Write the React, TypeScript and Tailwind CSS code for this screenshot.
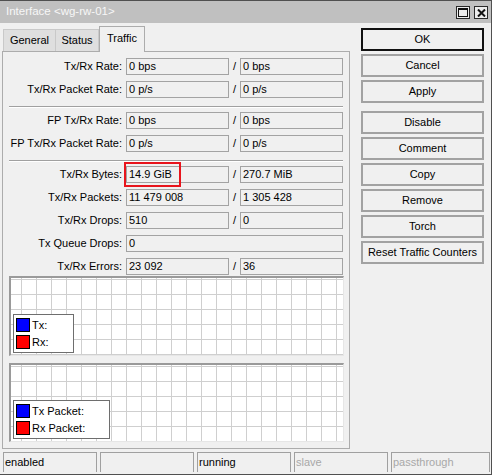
import type { ReactNode } from "react"

type Row = { label: string; tx: string; rx?: string; mark?: boolean }

const rates: Row[] = [
  { label: "Tx/Rx Rate:", tx: "0 bps", rx: "0 bps" },
  { label: "Tx/Rx Packet Rate:", tx: "0 p/s", rx: "0 p/s" },
]

const fpRates: Row[] = [
  { label: "FP Tx/Rx Rate:", tx: "0 bps", rx: "0 bps" },
  { label: "FP Tx/Rx Packet Rate:", tx: "0 p/s", rx: "0 p/s" },
]

const counters: Row[] = [
  { label: "Tx/Rx Bytes:", tx: "14.9 GiB", rx: "270.7 MiB", mark: true },
  { label: "Tx/Rx Packets:", tx: "11 479 008", rx: "1 305 428" },
  { label: "Tx/Rx Drops:", tx: "510", rx: "0" },
  { label: "Tx Queue Drops:", tx: "0" },
  { label: "Tx/Rx Errors:", tx: "23 092", rx: "36" },
]

const actions = ["Disable", "Comment", "Copy", "Remove", "Torch", "Reset Traffic Counters"]

function Field({ value, wide, children }: { value: string; wide?: boolean; children?: ReactNode }) {
  return (
    <div
      className={`relative h-[17px] ${wide ? "w-[217px]" : "w-[103px]"} border border-[#a3a3a3] pl-[2px] leading-[15px] text-black`}
    >
      {value}
      {children}
    </div>
  )
}

function FieldRow({ row }: { row: Row }) {
  return (
    <div className="flex h-[17px] items-center">
      <div className="w-[119px] mr-[4px] text-right text-black whitespace-nowrap">{row.label}</div>
      {row.rx === undefined ? (
        <Field value={row.tx} wide />
      ) : (
        <>
          <Field value={row.tx}>
            {row.mark && (
              <div className="absolute -left-[3px] -top-[5px] w-[57px] h-[25px] border-2 border-[#e8141c]" />
            )}
          </Field>
          <div className="w-[11px] text-center text-black">/</div>
          <Field value={row.rx} />
        </>
      )}
    </div>
  )
}

function Group({ rows }: { rows: Row[] }) {
  return (
    <div className="flex flex-col gap-[6px]">
      {rows.map((r) => (
        <FieldRow key={r.label} row={r} />
      ))}
    </div>
  )
}

function Separator() {
  return <div className="ml-[6px] mt-[8px] mb-[4px] w-[334px] h-[2px] border-t border-[#a0a0a0] border-b border-b-white" />
}

function Graph({ tx, rx, height }: { tx: string; rx: string; height: string }) {
  return (
    <div
      className={`relative ml-[6px] w-[335px] ${height} bg-white border-t-2 border-l-2 border-t-[#9a9a9a] border-l-[#9a9a9a] border-r border-b border-r-[#e6e6e6] border-b-[#e6e6e6] bg-[linear-gradient(to_right,#cfcfcf_1px,transparent_1px),linear-gradient(to_bottom,#cfcfcf_1px,transparent_1px)] bg-[size:15px_15px] bg-[position:10px_1px]`}
    >
      {/* legend box, bottom-left of the chart */}
      <div className="absolute left-[2px] bottom-[2px] flex flex-col gap-[3px] border border-[#6e6e6e] bg-white pl-[2px] pr-[24px] pt-[3px] pb-[3px]">
        <div className="flex items-center gap-[2px] h-[14px]">
          <div className="w-[14px] h-[14px] border border-black bg-[#0000ff]" />
          <span className="text-black whitespace-nowrap">{tx}</span>
        </div>
        <div className="flex items-center gap-[2px] h-[14px]">
          <div className="w-[14px] h-[14px] border border-black bg-[#ff0000]" />
          <span className="text-black whitespace-nowrap">{rx}</span>
        </div>
      </div>
    </div>
  )
}

function Button({ label, main }: { label: string; main?: boolean }) {
  return (
    <div
      className={`h-[23px] w-[123px] border-2 ${main ? "border-[#111]" : "border-[#a2a2a2]"} bg-[#f0f0f0] text-center leading-[19px] text-black`}
    >
      {label}
    </div>
  )
}

function StatusCell({ text, dim }: { text?: string; dim?: boolean }) {
  return (
    <div
      className={`h-[20px] w-[94px] border-t border-l border-r border-[#a0a0a0] pl-[1px] leading-[19px] ${dim ? "text-[#a8a8a8]" : "text-black"}`}
    >
      {text}
    </div>
  )
}

export default function App() {
  return (
    <div className="w-[494px] h-[476px] bg-white text-[11px] font-['Liberation_Sans',Arial,sans-serif]">
      <div className="w-[492px] h-[475px] flex flex-col bg-[#f0f0f0] border-t border-r border-b border-[#505050]">
        {/* title bar */}
        <div className="h-[22px] bg-[#c0c0c0] flex items-center justify-between pl-[6px] pr-[3px]">
          <span className="text-[#f7f7f7] text-[11.5px]">Interface &lt;wg-rw-01&gt;</span>
          <div className="flex gap-[4px] pt-[1px]">
            <div className="w-[14px] h-[13px] border border-[#2a2a2a] bg-[#ececec] flex items-center justify-center">
              <svg width="10" height="9" viewBox="0 0 10 9">
                <rect x="0.5" y="0.5" width="9" height="8" fill="none" stroke="#111" />
                <rect x="0" y="0" width="10" height="2" fill="#111" />
              </svg>
            </div>
            <div className="w-[14px] h-[13px] border border-[#2a2a2a] bg-[#ececec] flex items-center justify-center">
              <svg width="9" height="8" viewBox="0 0 9 8">
                <path d="M1 0.5 L8 7.5 M8 0.5 L1 7.5" stroke="#111" strokeWidth="2" />
              </svg>
            </div>
          </div>
        </div>

        <div className="flex pl-[2px]">
          {/* tabs + traffic panel */}
          <div className="w-[348px] flex flex-col">
            <div className="h-[28px] flex items-end pl-[1px]">
              <div className="h-[22px] w-[53px] border-l border-t border-r border-[#c9c9c9] bg-[#dfdfdf] text-center leading-[21px] text-black">
                General
              </div>
              <div className="h-[22px] w-[43px] border-t border-r border-[#c9c9c9] bg-[#dfdfdf] text-center leading-[21px] text-black">
                Status
              </div>
              <div className="relative z-10 -mb-px h-[26px] w-[46px] border-l border-t border-r border-[#acacac] bg-[#f0f0f0] text-center leading-[22px] text-black">
                Traffic
              </div>
            </div>
            <div className="h-[398px] border border-[#acacac] pt-[6px] flex flex-col">
              <Group rows={rates} />
              <Separator />
              <Group rows={fpRates} />
              <Separator />
              <Group rows={counters} />
              <div className="mt-[1px] flex flex-col gap-[7px]">
                <Graph tx="Tx:" rx="Rx:" height="h-[80px]" />
                <Graph tx="Tx Packet:" rx="Rx Packet:" height="h-[79px]" />
              </div>
            </div>
          </div>

          {/* dialog buttons */}
          <div className="ml-[11px] pt-[5px] flex flex-col">
            <div className="flex flex-col gap-[3px]">
              <Button label="OK" main />
              <Button label="Cancel" />
              <Button label="Apply" />
            </div>
            <div className="mt-[8px] flex flex-col gap-[3px]">
              {actions.map((a) => (
                <Button key={a} label={a} />
              ))}
            </div>
          </div>
        </div>

        {/* status bar */}
        <div className="mt-[3px] pl-[3px] flex gap-[3px]">
          <StatusCell text="enabled" />
          <StatusCell />
          <StatusCell text="running" />
          <StatusCell text="slave" dim />
          <div className="h-[20px] w-[99px] border-t border-l border-r border-[#a0a0a0] pl-[1px] leading-[19px] text-[#a8a8a8]">
            passthrough
          </div>
        </div>
      </div>
    </div>
  )
}
